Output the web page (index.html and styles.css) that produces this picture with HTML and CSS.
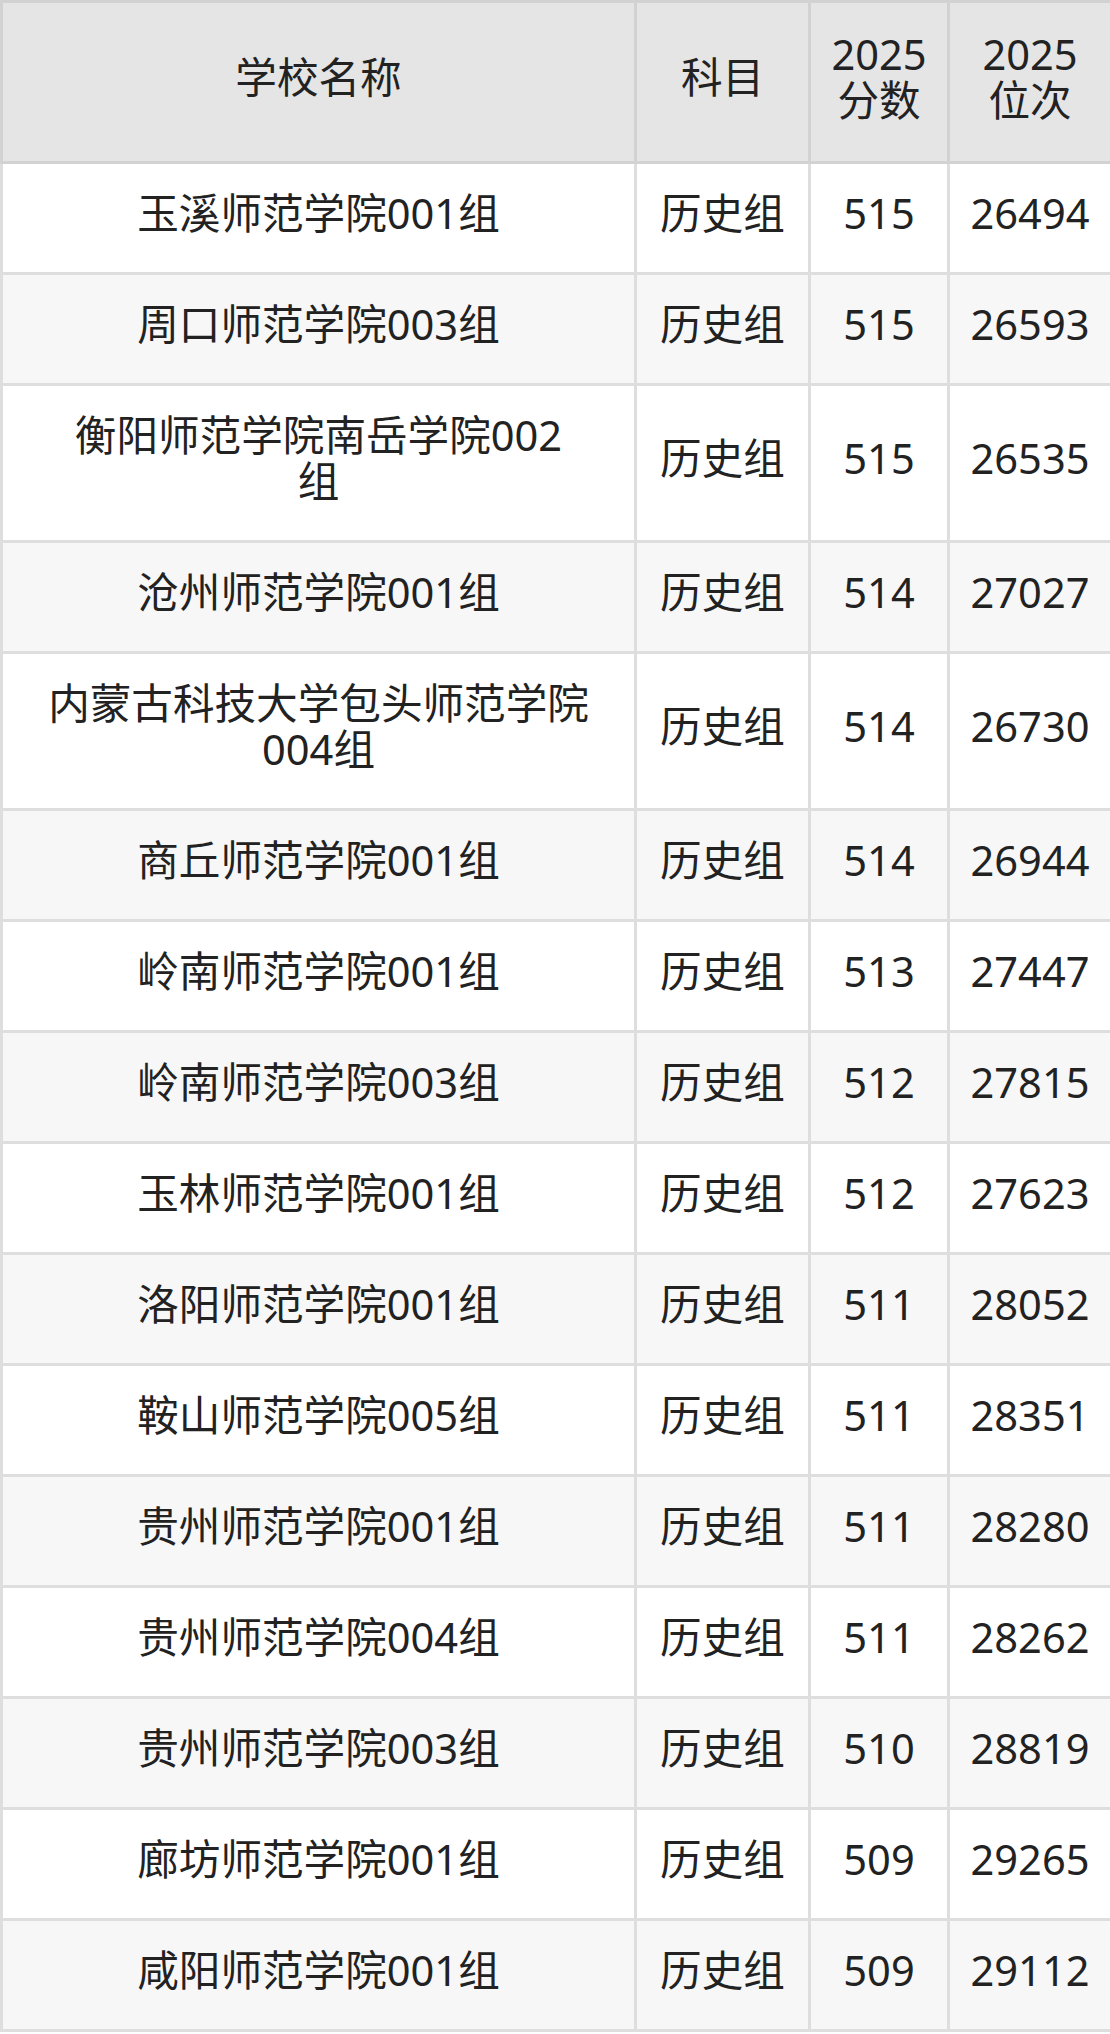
FILE: index.html
```html
<!DOCTYPE html>
<html lang="zh-CN">
<head>
<meta charset="utf-8">
<title>师范学院 历史组 2025</title>
<link rel="stylesheet" href="styles.css">
</head>
<body>
<table class="score-table">
  <colgroup>
    <col class="c-name">
    <col class="c-subj">
    <col class="c-score">
    <col class="c-rank">
  </colgroup>
  <thead>
    <tr>
      <th>学校名称</th>
      <th>科目</th>
      <th>2025<br>分数</th>
      <th>2025<br>位次</th>
    </tr>
  </thead>
  <tbody>
    <tr><td>玉溪师范学院001组</td><td>历史组</td><td>515</td><td>26494</td></tr>
    <tr><td>周口师范学院003组</td><td>历史组</td><td>515</td><td>26593</td></tr>
    <tr><td>衡阳师范学院南岳学院002<br>组</td><td>历史组</td><td>515</td><td>26535</td></tr>
    <tr><td>沧州师范学院001组</td><td>历史组</td><td>514</td><td>27027</td></tr>
    <tr><td>内蒙古科技大学包头师范学院<br>004组</td><td>历史组</td><td>514</td><td>26730</td></tr>
    <tr><td>商丘师范学院001组</td><td>历史组</td><td>514</td><td>26944</td></tr>
    <tr><td>岭南师范学院001组</td><td>历史组</td><td>513</td><td>27447</td></tr>
    <tr><td>岭南师范学院003组</td><td>历史组</td><td>512</td><td>27815</td></tr>
    <tr><td>玉林师范学院001组</td><td>历史组</td><td>512</td><td>27623</td></tr>
    <tr><td>洛阳师范学院001组</td><td>历史组</td><td>511</td><td>28052</td></tr>
    <tr><td>鞍山师范学院005组</td><td>历史组</td><td>511</td><td>28351</td></tr>
    <tr><td>贵州师范学院001组</td><td>历史组</td><td>511</td><td>28280</td></tr>
    <tr><td>贵州师范学院004组</td><td>历史组</td><td>511</td><td>28262</td></tr>
    <tr><td>贵州师范学院003组</td><td>历史组</td><td>510</td><td>28819</td></tr>
    <tr><td>廊坊师范学院001组</td><td>历史组</td><td>509</td><td>29265</td></tr>
    <tr><td>咸阳师范学院001组</td><td>历史组</td><td>509</td><td>29112</td></tr>
  </tbody>
</table>
</body>
</html>
```
FILE: styles.css
```css
html, body {
  margin: 0;
  padding: 0;
  background: #ffffff;
}

.score-table {
  width: 1110px;
  border-collapse: collapse;
  table-layout: fixed;
  font-family: "Noto Sans", "Noto Sans CJK SC", sans-serif;
  font-size: 41.6px;
  line-height: 46px;
  color: #222222;
}

.c-name { width: 634px; }
.c-subj { width: 174px; }
.c-score { width: 139px; }
.c-rank { width: 163px; }

.score-table th,
.score-table td {
  text-align: center;
  vertical-align: middle;
  font-weight: 400;
}

.score-table th {
  background: #e5e5e5;
  border: 3px solid #d2d2d2;
  padding: 28px 0 38px;
}

.score-table td {
  border: 3px solid #dedede;
  padding: 26px 0 36px;
}

.score-table tbody tr:nth-child(odd) td {
  background: #ffffff;
}

.score-table tbody tr:nth-child(even) td {
  background: #f7f7f7;
}
```
